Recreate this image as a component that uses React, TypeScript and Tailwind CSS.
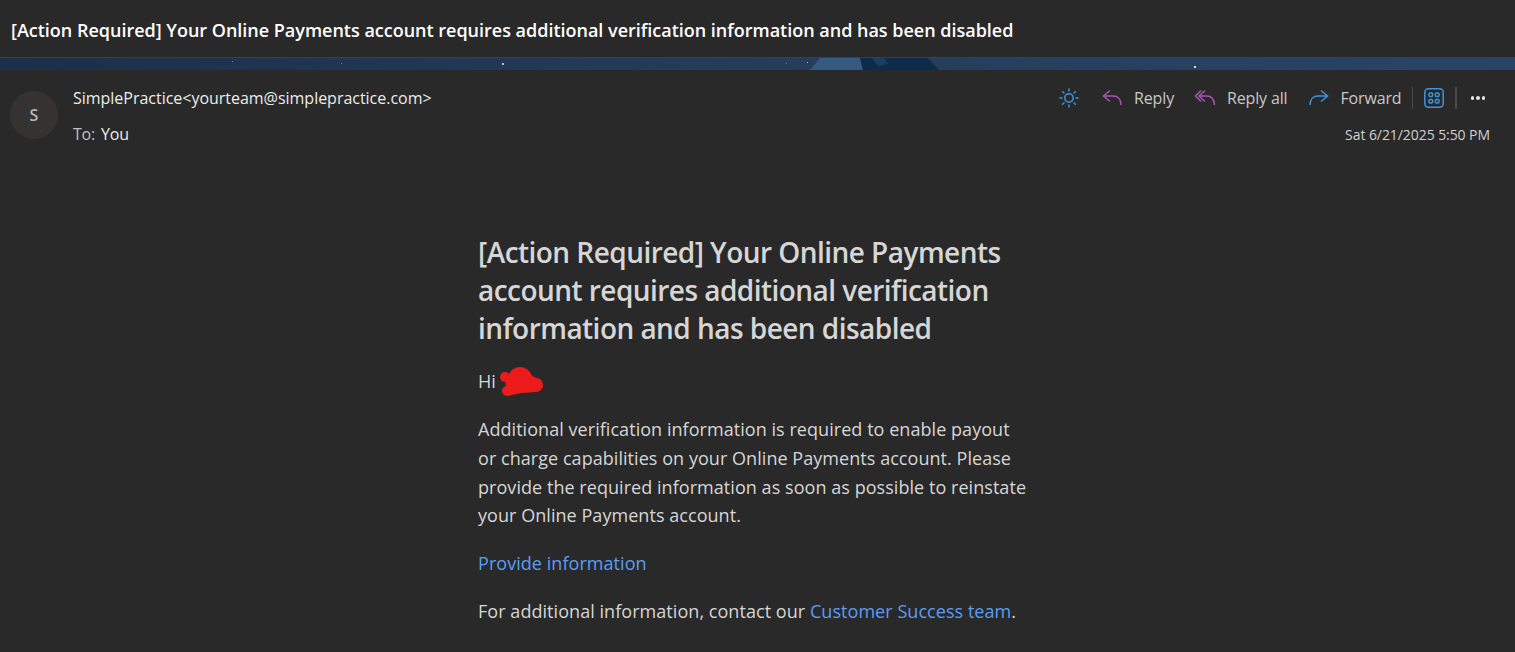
import React from "react";

const font = "font-['Open_Sans',_'Noto_Sans',_sans-serif]";

function ReplyIcon({ color }: { color: string }) {
  return (
    <svg width="22" height="22" viewBox="0 0 22 22" fill="none" stroke={color} strokeWidth="1.5">
      <path d="M9 3.5 L2.5 9 L9 14.5" />
      <path d="M2.5 9 H12 C16.5 9 20 12 20 18" />
    </svg>
  );
}

function ReplyAllIcon() {
  return (
    <svg width="22" height="22" viewBox="0 0 22 22" fill="none" stroke="#a855b5" strokeWidth="1.5">
      <path d="M7 3.5 L1.5 9 L7 14.5" />
      <path d="M11 3.5 L5 9 L11 14.5" />
      <path d="M5 9 H13 C17 9 20.5 12 20.5 18" />
    </svg>
  );
}

function ForwardIcon() {
  return (
    <svg width="22" height="22" viewBox="0 0 22 22" fill="none" stroke="#3f93e0" strokeWidth="1.5">
      <path d="M13 3.5 L19.5 9 L13 14.5" />
      <path d="M19.5 9 H10 C5.5 9 2 12 2 18" />
    </svg>
  );
}

function SunIcon() {
  return (
    <svg width="22" height="22" viewBox="0 0 22 22" fill="none" stroke="#3f93e0" strokeWidth="1.5" strokeLinecap="round">
      <circle cx="11" cy="11" r="4.2" />
      <path d="M11 2 V4 M11 18 V20 M2 11 H4 M18 11 H20 M4.7 4.7 L6 6 M16 16 L17.3 17.3 M4.7 17.3 L6 16 M16 6 L17.3 4.7" />
    </svg>
  );
}

function AppsIcon() {
  return (
    <svg width="20" height="20" viewBox="0 0 20 20" fill="none" stroke="#3f93e0" strokeWidth="1.5">
      <rect x="0.8" y="0.8" width="18.4" height="18.4" rx="3.5" />
      <rect x="5" y="5" width="3.6" height="3.6" rx="1" />
      <rect x="11.4" y="5" width="3.6" height="3.6" rx="1" />
      <rect x="5" y="11.4" width="3.6" height="3.6" rx="1" />
      <rect x="11.4" y="11.4" width="3.6" height="3.6" rx="1" />
    </svg>
  );
}

function Banner() {
  return (
    <div className="h-3 bg-gradient-to-r from-[#1c2f49] via-[#253c5c] to-[#2a4466] overflow-hidden">
      <svg width="1515" height="12" viewBox="0 0 1515 12">
        <path d="M810 12 L820 0 H860 L863 12 Z" fill="#36597f" />
        <path d="M860 0 H928 L939 12 H863 Z" fill="#0f2b4c" />
        <path d="M872 0 H884 L888 6 L878 8 Z" fill="#1c3d63" />
        <rect x="232" y="3" width="1" height="1" fill="#6f869f" />
        <rect x="341" y="5" width="1" height="1" fill="#6f869f" />
        <rect x="502" y="5" width="2" height="2" fill="#aebccb" />
        <rect x="786" y="5" width="1" height="1" fill="#6f869f" />
        <rect x="807" y="4" width="1" height="1" fill="#aebccb" />
        <rect x="1194" y="8" width="2" height="2" fill="#d5dde6" />
      </svg>
    </div>
  );
}

function Action({ icon, label }: { icon: React.ReactNode; label: string }) {
  return (
    <div className="flex items-center gap-[11px]">
      {icon}
      <span className="text-[16px] tracking-[-0.15px] text-[#c8c8c8]">{label}</span>
    </div>
  );
}

export default function App() {
  return (
    <div className={`h-[652px] overflow-hidden bg-[#292929] ${font}`}>
      <div className="h-[57px] border-b border-[#3f3f3f] box-content flex items-center px-[11px] pt-0 bg-[#292929]">
        <h1 className="mt-[4px] text-[18px] font-semibold tracking-[-0.01px] whitespace-nowrap text-white">
          [Action Required] Your Online Payments account requires additional verification information and has been disabled
        </h1>
      </div>
      <Banner />

      <div className="flex justify-between pl-[10px] pr-[25px] pt-[16px]">
        <div className="flex gap-[15px]">
          <div className="w-12 h-12 mt-[5px] rounded-full bg-[#343331] flex items-center justify-center text-[#b9b9b9] font-semibold text-[16px]">
            S
          </div>
          <div>
            <div className="text-[16px] tracking-[-0.02px] text-[#ececec] leading-[24px]">
              SimplePractice&lt;yourteam@simplepractice.com&gt;
            </div>
            <div className="mt-[12px] text-[16px] tracking-[-0.2px] leading-[24px] text-[#c0c0c0]">
              To: <span className="ml-[2px] text-[#ececec]">You</span>
            </div>
          </div>
        </div>

        <div className="flex flex-col items-end">
          <div className="flex items-center h-6">
            <SunIcon />
            <div className="ml-[21px]"><Action icon={<ReplyIcon color="#a855b5" />} label="Reply" /></div>
            <div className="ml-[20px]"><Action icon={<ReplyAllIcon />} label="Reply all" /></div>
            <div className="ml-[20px]"><Action icon={<ForwardIcon />} label="Forward" /></div>
            <div className="ml-[10px] w-px h-[22px] bg-[#4a4a4a]" />
            <div className="ml-[11px]"><AppsIcon /></div>
            <div className="ml-[11px] w-[2px] h-[22px] bg-[#4a4a4a]" />
            <div className="ml-[14px] mr-[5px] flex gap-[2px]">
              <span className="w-[3.5px] h-[3.5px] rounded-full bg-[#e6e6e6]" />
              <span className="w-[3.5px] h-[3.5px] rounded-full bg-[#e6e6e6]" />
              <span className="w-[3.5px] h-[3.5px] rounded-full bg-[#e6e6e6]" />
            </div>
          </div>
          <div className="mt-[16px] text-[14px] tracking-[-0.07px] leading-[18px] text-[#d0d0d0]">
            Sat 6/21/2025 5:50 PM
          </div>
        </div>
      </div>

      <div className="ml-[478px] mt-[87px] w-[600px] text-[#d6d6d6]">
        <h2 className="text-[28px] font-semibold leading-[38px] tracking-[-0.54px] text-[#d6d6d6]">
          [Action Required] Your Online Payments<br />
          account requires additional verification<br />
          information and has been disabled
        </h2>
        <p className="mt-[20px] text-[18px] leading-[29px] flex items-center">
          Hi
          <svg className="ml-[4px]" width="44" height="29" viewBox="0 0 44 29">
            <g fill="#ec1c1c">
              <circle cx="5" cy="10" r="5" />
              <circle cx="20" cy="12" r="12" />
              <circle cx="7" cy="24" r="5" />
              <circle cx="36" cy="18" r="7" />
              <path d="M5 12 L20 1 L36 11 L36 25 L22 26 L7 29 Z" />
            </g>
          </svg>
        </p>
        <p className="mt-[19px] text-[18px] leading-[28.8px] tracking-[0.05px]">
          Additional verification information is required to enable payout<br />
          or charge capabilities on your Online Payments account. Please<br />
          provide the required information as soon as possible to reinstate<br />
          your Online Payments account.
        </p>
        <p className="mt-[19px] text-[18px] leading-[29px] tracking-[0.05px] text-[#5b9df5]">Provide information</p>
        <p className="mt-[19px] text-[18px] leading-[29px] tracking-[0.05px]">
          For additional information, contact our <span className="text-[#5b9df5]">Customer Success team</span>.
        </p>
      </div>
    </div>
  );
}
